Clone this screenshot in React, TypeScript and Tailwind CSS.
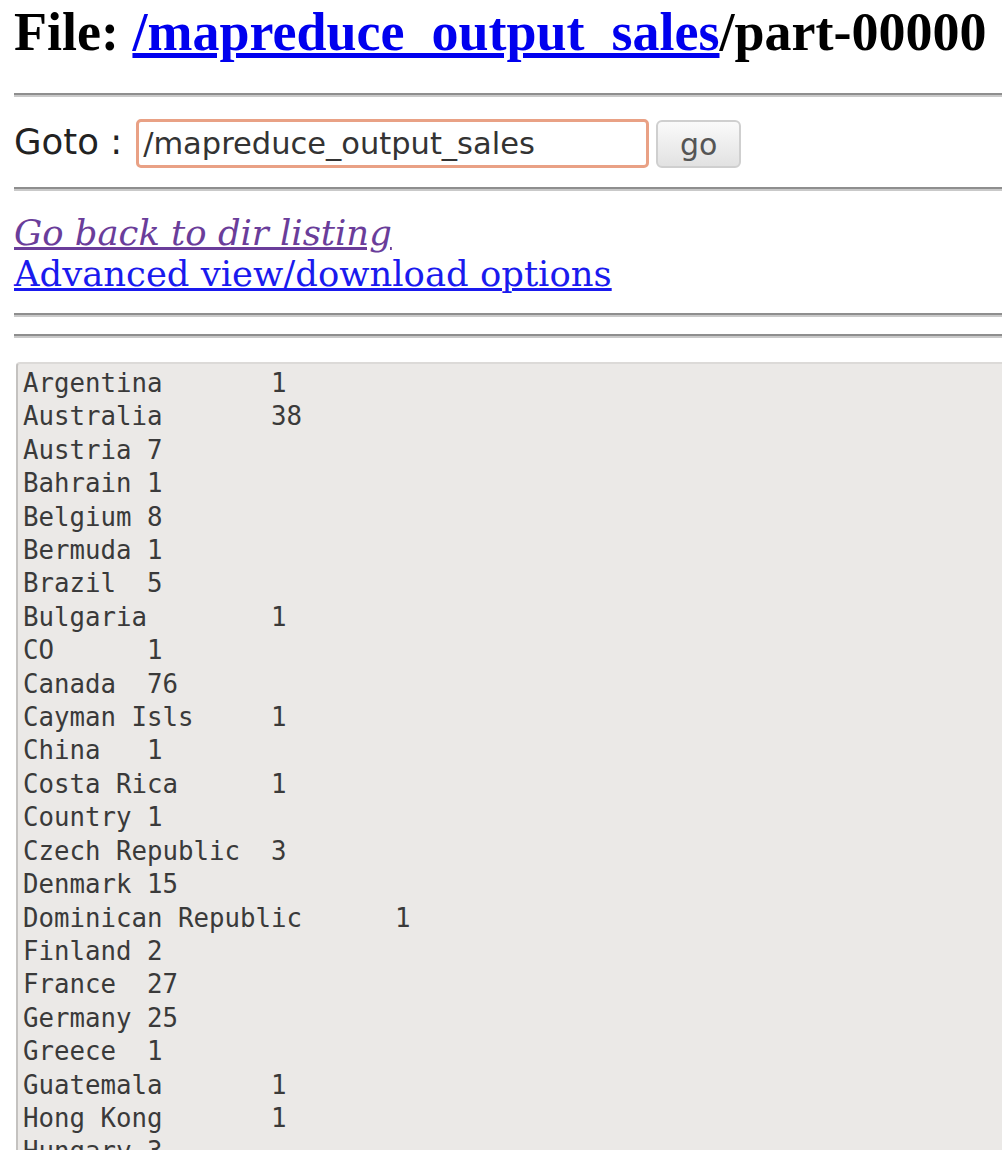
const rows: string[] = [
  'Argentina\t1',
  'Australia\t38',
  'Austria\t7',
  'Bahrain\t1',
  'Belgium\t8',
  'Bermuda\t1',
  'Brazil\t5',
  'Bulgaria\t1',
  'CO\t1',
  'Canada\t76',
  'Cayman Isls\t1',
  'China\t1',
  'Costa Rica\t1',
  'Country\t1',
  'Czech Republic\t3',
  'Denmark\t15',
  'Dominican Republic\t1',
  'Finland\t2',
  'France\t27',
  'Germany\t25',
  'Greece\t1',
  'Guatemala\t1',
  'Hong Kong\t1',
  'Hungary\t3',
  'India\t2',
  'Ireland\t49',
  'Israel\t1',
]

function Rule({ className = '' }: { className?: string }) {
  return <div className={'h-[4px] border-t-2 border-b-2 border-t-[#8e8e8e] border-b-[#c9c9c9] ' + className} />
}

export default function App() {
  return (
    <div className="min-h-screen w-full overflow-hidden bg-white pl-[14px] pt-[3px] text-black">
      <h1 className="whitespace-nowrap font-['Liberation_Serif',serif] text-[54px] font-bold leading-[58px]">
        File:{' '}
        <a href="#" className="text-[#0000ee] underline">
          /mapreduce_output_sales
        </a>
        /part-00000
      </h1>

      <Rule className="mt-[32px]" />

      <div className="mt-[22px] flex h-[49px] items-center whitespace-nowrap">
        <span className="pb-[3px] font-['DejaVu_Sans',sans-serif] text-[35.5px] leading-none text-[#222]">Goto :</span>
        <div className="ml-[14px] flex h-[49px] w-[513px] items-center rounded-[5px] border-[3px] border-[#e9a185] bg-white pl-[4px] font-['DejaVu_Sans',sans-serif] text-[30.5px] text-[#333]">
          /mapreduce_output_sales
        </div>
        <button className="ml-[7px] h-[48px] w-[85px] rounded-[6px] border-2 border-[#cfcfcf] bg-gradient-to-b from-[#fafafa] to-[#e2e2e2] font-['DejaVu_Sans',sans-serif] text-[30px] text-[#555]">
          go
        </button>
      </div>

      <Rule className="mt-[19px]" />

      <div className="mt-[21px] whitespace-nowrap font-['DejaVu_Serif',serif] text-[35.4px] leading-[41px]">
        <a href="#" className="block w-fit italic text-[#6a3d9a] underline">
          Go back to dir listing
        </a>
        <a href="#" className="block w-fit text-[#1a1aee] underline">
          Advanced view/download options
        </a>
      </div>

      <Rule className="mt-[19px]" />
      <Rule className="mt-[17px]" />

      <div className="ml-[2px] mt-[24px] h-[788px] overflow-hidden rounded-tl-[4px] border-l-2 border-t-2 border-l-[#c4c2c0] border-t-[#dcdad8] bg-[#ebe9e7] pl-[5px] pt-[3px]">
        <pre className="font-['DejaVu_Sans_Mono',monospace] text-[25.75px] leading-[33.4px] text-[#3a3a3a] [tab-size:8]">
          {rows.join('\n')}
        </pre>
      </div>
    </div>
  )
}
